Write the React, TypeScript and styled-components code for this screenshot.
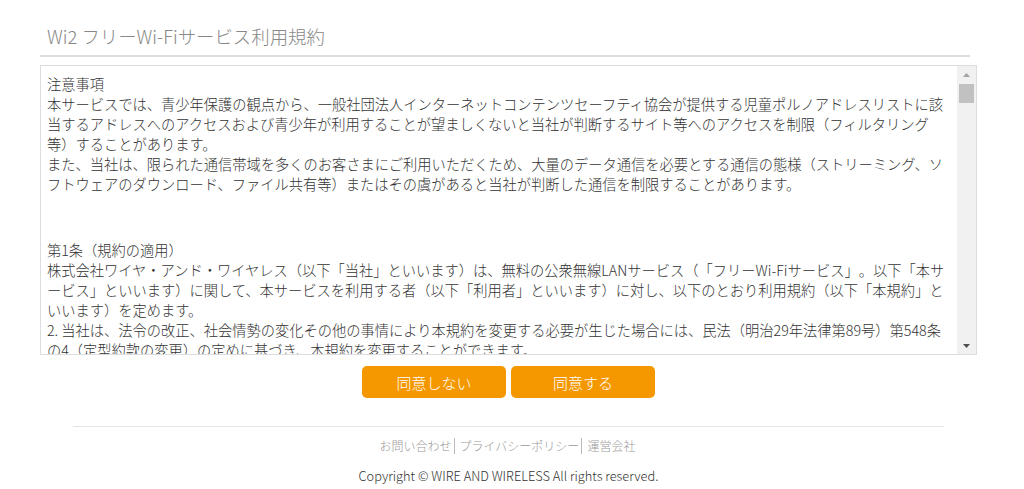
import React from 'react';
import styled, { createGlobalStyle } from 'styled-components';

const GlobalStyle = createGlobalStyle`
  html, body { margin: 0; padding: 0; background: #fff; }
  body { font-family: "Noto Sans CJK JP", "Noto Sans", sans-serif; color: #333; }
`;

const Main = styled.main`
  margin-left: 40px;
  width: 937px;
`;

const Title = styled.h1`
  margin: 0;
  width: 923px;
  padding: 24px 0 7px 7px;
  font-size: 18.4px;
  line-height: 24px;
  font-weight: 300;
  color: #888;
  border-bottom: 2px solid #ddd;
`;

const TermsFrame = styled.div`
  position: relative;
  margin-top: 8px;
  box-sizing: border-box;
  height: 290px;
  border: 1px solid #ddd;
`;

const TermsScroll = styled.div`
  box-sizing: border-box;
  height: 100%;
  overflow: hidden;
  padding: 8px 25px 0 6px;
  font-size: 14.25px;
  line-height: 20px;
  font-weight: 300;
  color: #333;
  line-break: loose;
  text-spacing-trim: space-all;
`;

const Scrollbar = styled.div`
  position: absolute;
  top: 0;
  right: 0;
  bottom: 0;
  width: 19px;
  background: #f1f1f1;
  display: flex;
  flex-direction: column;
`;

const ArrowButton = styled.div`
  height: 17px;
  flex: none;
  display: flex;
  align-items: center;
  justify-content: center;
`;

const Track = styled.div`
  flex: 1;
  padding: 1px 2px 0;
`;

const Thumb = styled.div`
  height: 19px;
  background: #c1c1c1;
`;

const Notice = styled.section`
  margin-bottom: 46px;
`;

const Article = styled.section`
  margin-bottom: 20px;
`;

const Line = styled.p`
  margin: 0;
`;

const ButtonRow = styled.div`
  margin-top: 11px;
  display: flex;
  justify-content: center;
  gap: 5px;
`;

const Button = styled.button`
  width: 144px;
  height: 32px;
  border: none;
  border-radius: 5px;
  background: #f59800;
  color: #fff;
  font-family: "Noto Sans CJK JP", sans-serif;
  font-weight: 300;
  font-size: 15px;
  cursor: pointer;
  padding: 0;
`;

const Footer = styled.footer`
  margin: 28px 33px 0;
  border-top: 1px solid #e5e5e5;
  text-align: center;
`;

const Links = styled.nav`
  margin-top: 11px;
  display: flex;
  justify-content: center;
  font-size: 12px;
  line-height: 16px;
  font-weight: 300;
`;

const LinkItem = styled.a<{ $last?: boolean }>`
  color: #999;
  text-decoration: none;
  padding: 0 2px 0 5px;
  border-right: ${(p) => (p.$last ? 'none' : '1px solid #bbb')};
  &:first-child { padding-left: 0; }
`;

const Copyright = styled.p`
  margin: 14px 0 0;
  font-size: 12.8px;
  line-height: 16px;
  font-weight: 300;
  color: #333;
`;

const notice = [
  '注意事項',
  '本サービスでは、青少年保護の観点から、一般社団法人インターネットコンテンツセーフティ協会が提供する児童ポルノアドレスリストに該当するアドレスへのアクセスおよび青少年が利用することが望ましくないと当社が判断するサイト等へのアクセスを制限（フィルタリング等）することがあります。',
  'また、当社は、限られた通信帯域を多くのお客さまにご利用いただくため、大量のデータ通信を必要とする通信の態様（ストリーミング、ソフトウェアのダウンロード、ファイル共有等）またはその虞があると当社が判断した通信を制限することがあります。',
];

const articles: string[][] = [
  [
    '第1条（規約の適用）',
    '株式会社ワイヤ・アンド・ワイヤレス（以下「当社」といいます）は、無料の公衆無線LANサービス（「フリーWi-Fiサービス」。以下「本サービス」といいます）に関して、本サービスを利用する者（以下「利用者」といいます）に対し、以下のとおり利用規約（以下「本規約」といいます）を定めます。',
    '2. 当社は、法令の改正、社会情勢の変化その他の事情により本規約を変更する必要が生じた場合には、民法（明治29年法律第89号）第548条の4（定型約款の変更）の定めに基づき、本規約を変更することができます。',
    '3. 前項の場合、当社は、変更後の本規約の内容及びその効力発生時期を、当社のウェブサイトへの掲載その他の適切な方法により利用者に周知するものとし、効力発生時期以降は変更後の本規約が適用されるものとします。',
  ],
  [
    '第2条（本サービスの内容）',
    '本サービスは、当社が指定する施設、店舗等の提供エリアにおいて、利用者が無線LAN機能を備えた端末を用いてインターネットへ接続することができるサービスです。',
    '2. 本サービスの提供エリア、利用可能時間、接続時間その他の利用条件は、当社が別途定めるところによります。',
  ],
  [
    '第3条（禁止事項）',
    '利用者は、本サービスの利用にあたり、法令または公序良俗に違反する行為、当社または第三者の権利を侵害する行為、本サービスの運営を妨げる行為その他当社が不適切と判断する行為を行ってはならないものとします。',
  ],
];

export default function App() {
  return (
    <>
      <GlobalStyle />
      <Main>
        <Title>Wi2 フリーWi-Fiサービス利用規約</Title>
        <TermsFrame>
          <TermsScroll lang="ja">
            <Notice>
              {notice.map((t, i) => (
                <Line key={i}>{t}</Line>
              ))}
            </Notice>
            {articles.map((a, i) => (
              <Article key={i}>
                {a.map((t, j) => (
                  <Line key={j}>{t}</Line>
                ))}
              </Article>
            ))}
          </TermsScroll>
          <Scrollbar aria-hidden="true">
            <ArrowButton>
              <svg width="7" height="4" viewBox="0 0 7 4">
                <polygon points="0,4 7,4 3.5,0" fill="#a3a3a3" />
              </svg>
            </ArrowButton>
            <Track>
              <Thumb />
            </Track>
            <ArrowButton>
              <svg width="7" height="4" viewBox="0 0 7 4">
                <polygon points="0,0 7,0 3.5,4" fill="#505050" />
              </svg>
            </ArrowButton>
          </Scrollbar>
        </TermsFrame>
        <ButtonRow>
          <Button type="button">同意しない</Button>
          <Button type="button">同意する</Button>
        </ButtonRow>
        <Footer>
          <Links>
            <LinkItem href="#">お問い合わせ</LinkItem>
            <LinkItem href="#">プライバシーポリシー</LinkItem>
            <LinkItem href="#" $last>運営会社</LinkItem>
          </Links>
          <Copyright>Copyright © WIRE AND WIRELESS All rights reserved.</Copyright>
        </Footer>
      </Main>
    </>
  );
}
